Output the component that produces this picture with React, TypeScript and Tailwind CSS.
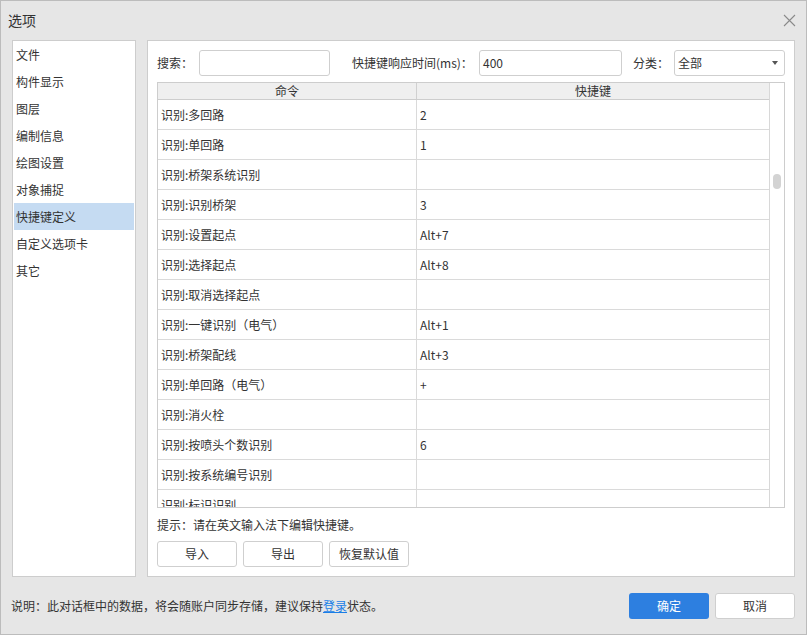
import React from "react";

const FONT = {
  fontFamily: '"Microsoft YaHei", "Noto Sans CJK SC", "Noto Sans", sans-serif',
};

const sideItems = [
  "文件",
  "构件显示",
  "图层",
  "编制信息",
  "绘图设置",
  "对象捕捉",
  "快捷键定义",
  "自定义选项卡",
  "其它",
];

const rows: [string, string][] = [
  ["识别:多回路", "2"],
  ["识别:单回路", "1"],
  ["识别:桥架系统识别", ""],
  ["识别:识别桥架", "3"],
  ["识别:设置起点", "Alt+7"],
  ["识别:选择起点", "Alt+8"],
  ["识别:取消选择起点", ""],
  ["识别:一键识别（电气）", "Alt+1"],
  ["识别:桥架配线", "Alt+3"],
  ["识别:单回路（电气）", "+"],
  ["识别:消火栓", ""],
  ["识别:按喷头个数识别", "6"],
  ["识别:按系统编号识别", ""],
  ["识别:标识识别", ""],
];

function Btn({ children, className = "" }: { children: React.ReactNode; className?: string }) {
  return (
    <button
      className={
        "h-[26px] w-[80px] rounded-[3px] border border-[#cfcfcf] bg-white text-[12px] text-[#333] " +
        className
      }
    >
      {children}
    </button>
  );
}

export default function App() {
  return (
    <div
      style={FONT}
      className="flex h-[635px] w-[807px] flex-col border border-[#bcbcbc] bg-[#e6e6e6] text-[12px] text-[#333]"
    >
      {/* title */}
      <div className="flex h-[39px] shrink-0 items-center justify-between pl-[7px] pr-[10px]">
        <span className="text-[14px] text-[#333]">选项</span>
        <svg width="13" height="13" viewBox="0 0 13 13">
          <path d="M1 1L12 12M12 1L1 12" stroke="#8a8a8a" strokeWidth="1.1" />
        </svg>
      </div>

      {/* body */}
      <div className="flex h-[537px] shrink-0 gap-[11px] pl-[11px] pr-[11px]">
        <div className="w-[124px] border border-[#cdcdcd] bg-white">
          {sideItems.map((s) => (
            <div
              key={s}
              className={
                "mx-px flex h-[27px] items-center pl-[2px] " +
                (s === "快捷键定义" ? "bg-[#c5dbf2]" : "")
              }
            >
              {s}
            </div>
          ))}
        </div>

        <div className="flex flex-1 flex-col border border-[#cdcdcd] bg-white px-[9px] pt-[9px]">
          {/* search row */}
          <div className="flex h-[26px] items-center">
            <span className="w-[42px]">搜索：</span>
            <div className="h-[26px] w-[131px] rounded-[3px] border border-[#cfcfcf]" />
            <span className="ml-[22px] w-[127px]">快捷键响应时间(ms)：</span>
            <div className="flex h-[26px] w-[143px] items-center rounded-[3px] border border-[#cfcfcf] pl-[3px]">
              400
            </div>
            <span className="ml-[10px] w-[42px] pl-px">分类：</span>
            <div className="flex h-[26px] w-[111px] items-center justify-between rounded-[3px] border border-[#cfcfcf] pl-[3px] pr-[6px]">
              <span>全部</span>
              <svg width="6" height="4" viewBox="0 0 6 4">
                <path d="M0 0H6L3 4Z" fill="#555" />
              </svg>
            </div>
          </div>

          {/* table */}
          <div className="mt-[6px] flex h-[426px] border border-[#cdcdcd]">
            <div className="flex-1 overflow-hidden">
              <div className="flex h-[17px] border-b border-[#cdcdcd] bg-[#efefef]">
                <div className="flex w-[259px] items-center justify-center border-r border-[#d0d0d0]">
                  命令
                </div>
                <div className="flex flex-1 items-center justify-center">快捷键</div>
              </div>
              {rows.map(([c, k]) => (
                <div key={c} className="flex h-[30px] border-b border-[#dadada]">
                  <div className="flex w-[259px] items-center border-r border-[#dadada] pl-[3px]">
                    {c}
                  </div>
                  <div className="flex flex-1 items-center pl-[3px]">{k}</div>
                </div>
              ))}
            </div>
            <div className="w-[15px] shrink-0 border-l border-[#d8d8d8] bg-white pl-[3px] pt-[91px]">
              <div className="h-[15px] w-[8px] rounded-full bg-[#d3d3d3]" />
            </div>
          </div>

          <div className="mt-[9px] h-[16px] leading-[16px]">提示：请在英文输入法下编辑快捷键。</div>
          <div className="mt-[8px] flex gap-[6px]">
            <Btn>导入</Btn>
            <Btn>导出</Btn>
            <Btn>恢复默认值</Btn>
          </div>
        </div>
      </div>

      {/* footer */}
      <div className="flex flex-1 items-center justify-between pl-[10px] pr-[11px]">
        <span>
          说明：此对话框中的数据，将会随账户同步存储，建议保持
          <span className="text-[#1a7ee6] underline">登录</span>
          状态。
        </span>
        <div className="flex gap-[6px]">
          <button className="h-[26px] w-[80px] rounded-[3px] bg-[#2d7fe0] text-[12px] text-white">
            确定
          </button>
          <Btn>取消</Btn>
        </div>
      </div>
    </div>
  );
}
